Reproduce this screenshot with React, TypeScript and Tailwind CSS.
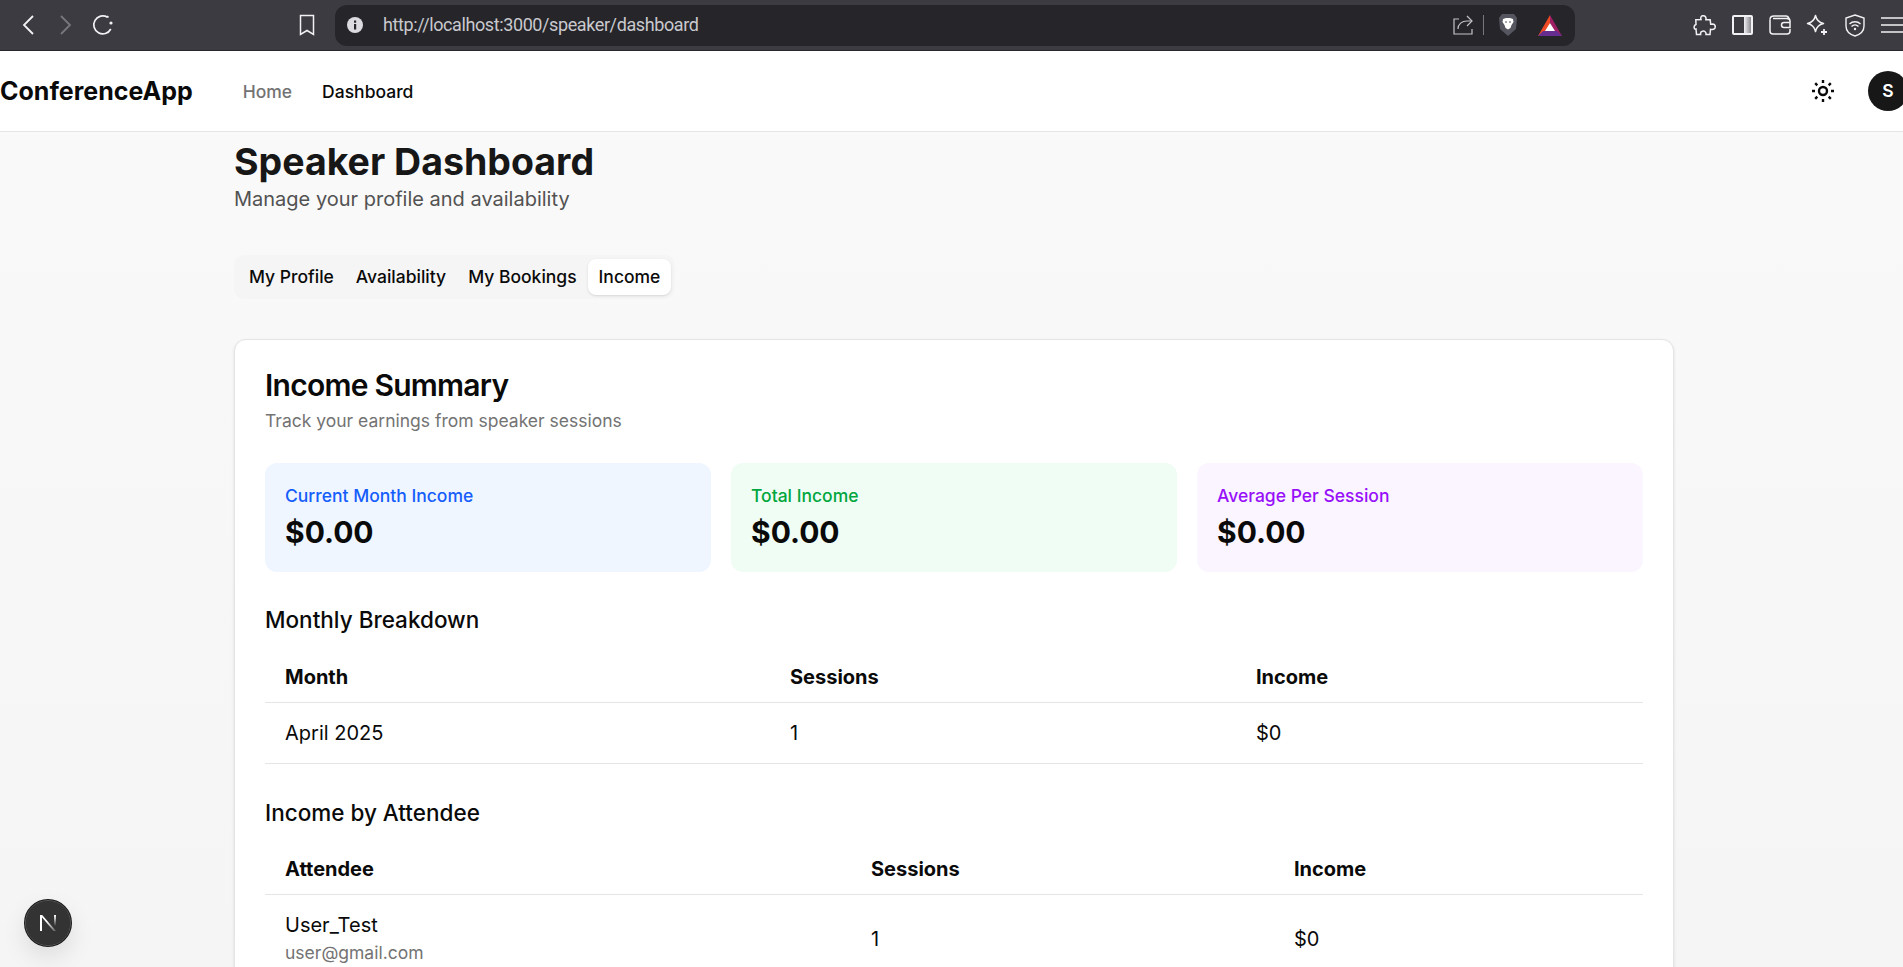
const tabs = ['My Profile', 'Availability', 'My Bookings', 'Income'];

const summary = [
  { label: 'Current Month Income', box: 'bg-[#eff6ff]', text: 'text-[#155dfc]' },
  { label: 'Total Income', box: 'bg-[#f0fdf4]', text: 'text-[#00a63e]' },
  { label: 'Average Per Session', box: 'bg-[#faf5ff]', text: 'text-[#9810fa]' },
];

function BrowserBar() {
  return (
    <div className="h-[51px] bg-[#3b3b41] border-b border-[#28282c] flex items-center shrink-0 text-[#f2f2f4]">
      <div className="flex items-center w-[335px] shrink-0 pl-[22px]">
        <svg width="12" height="20" viewBox="0 0 12 20" fill="none" stroke="currentColor" strokeWidth="1.8">
          <path d="M11 1 2 10l9 9" />
        </svg>
        <svg width="12" height="20" viewBox="0 0 12 20" fill="none" stroke="#77777c" strokeWidth="1.8" className="ml-[26px]">
          <path d="m1 1 9 9-9 9" />
        </svg>
        <svg width="22" height="22" viewBox="0 0 22 22" fill="none" stroke="currentColor" strokeWidth="1.7" className="ml-[20px]">
          <path d="M15.5 3.2A9 9 0 1 0 18.8 15" />
          <path d="M15 2l1.5 1.5" />
          <circle cx="19" cy="9" r="1.6" fill="currentColor" stroke="none" />
        </svg>
        <svg width="16" height="22" viewBox="0 0 16 22" fill="none" stroke="currentColor" strokeWidth="1.5" className="ml-[185px]">
          <path d="M1.5 1.5h13v19L8 16.5l-6.500 4z" />
        </svg>
      </div>
      <div className="w-[1240px] h-[41px] shrink-0 bg-[#25252a] rounded-[12px] flex items-center pl-[12px] pr-[13px]">
        <svg width="16" height="16" viewBox="0 0 16 16">
          <circle cx="8" cy="8" r="8" fill="#dcdce0" />
          <rect x="7" y="7" width="2.200" height="5.500" fill="#25252a" />
          <rect x="7" y="3.500" width="2.200" height="2.200" fill="#25252a" />
        </svg>
        <span className="ml-[20px] -mt-[2px] text-[18px] tracking-[-0.4px] text-[#c9c9ce] font-['Roboto',sans-serif]">http://localhost:3000/speaker/dashboard</span>
        <div className="ml-auto flex items-center">
          <svg width="20" height="20" viewBox="0 0 20 20" fill="none" stroke="#c4c4c8" strokeWidth="1.200">
            <path d="M6 4H1v15h18v-5" />
            <path d="M5 14c0-5 4-8 9-8h4" />
            <path d="M14 1l5 5-5 5" />
          </svg>
          <div className="w-px h-[20px] bg-[#77777c] ml-[10px]" />
          <svg width="20" height="24" viewBox="0 0 20 24" className="ml-[14px]">
            <path d="M4 1h12l3 4-1 11-8 7-8-7L1 5z" fill="#565661" />
            <path d="M5 6l3-1h4l3 1 .5 3-2 3-1 3-2.500 1.500L7.500 15l-1-3-2-3z" fill="#fff" />
            <path d="M7 9h2M11 9h2" stroke="#565661" strokeWidth="1" />
          </svg>
          <svg width="24" height="21" viewBox="0 0 24 21" className="ml-[20px]">
            <path d="M12 0 L24 21 H17 L12 8z" fill="#9e1f63" />
            <path d="M12 0 L0 21 H7 L12 8z" fill="#ef4a23" />
            <path d="M0 21 H24 L19 16 H5z" fill="#662d91" />
            <path d="M12 8 L17 16 H7z" fill="#fff" />
          </svg>
        </div>
      </div>
      <div className="flex items-center shrink-0 ml-[111px]">
        <div className="w-[37.500px] flex justify-center">
          <svg width="23" height="23" viewBox="0 0 23 23" fill="none" stroke="currentColor" strokeWidth="1.500">
            <path d="M8 5.500C6.500 1.500 12 0 13 4c.2.800-.2 1.300-.2 1.800h4.400l.5 4.500c.5 0 1-.3 1.800-.3 4 .5 3.500 6-.7 5.500-.5 0-1-.2-1.300-.2l-.5 5.200h-4c0-.7.200-1-.300-2-1.400-2.500-5.500-1.500-5.200 1.500l.1.500H3.500l-.5-5.500C.5 16 .5 11 3 10.500l-.2-4.700z" />
          </svg>
        </div>
        <div className="w-[37.500px] flex justify-center">
          <div className="w-[21px] h-[20px] border-2 border-[#f2f2f4] rounded-[2px] flex justify-end">
            <div className="w-[7px] bg-gradient-to-r from-[#f2f2f4] to-[#8a8a8f]" />
          </div>
        </div>
        <div className="w-[37.500px] flex justify-center">
          <svg width="22" height="20" viewBox="0 0 22 20" fill="none" stroke="currentColor" strokeWidth="1.500">
            <path d="M1 4.500C1 2 2.500 1 5 1h12c1.500 0 2.500 1 3 2.500H4" />
            <path d="M1 4.500V16c0 2 1 3 3 3h14c2 0 3-1 3-3v-2" />
            <path d="M21 7v-1c0-1.500-1-2.500-3-2.500" />
            <path d="M21 7.500h-6c-1.500 0-2.500 1-2.500 2.500s1 2.500 2.500 2.500h6z" />
          </svg>
        </div>
        <div className="w-[37.500px] flex justify-center">
          <svg width="22" height="22" viewBox="0 0 22 22" fill="none" stroke="currentColor" strokeWidth="1.500">
            <path d="M9.500 1.500c1 4.500 3.500 7 8 8-4.500 1-7 3.500-8 8-1-4.500-3.500-7-8-8 4.500-1 7-3.500 8-8z" strokeLinejoin="round" />
            <path d="M18 15v6M15 18h6" strokeWidth="1.800" />
          </svg>
        </div>
        <div className="w-[37.500px] flex justify-center">
          <svg width="20" height="23" viewBox="0 0 20 23" fill="none" stroke="currentColor" strokeWidth="1.400">
            <path d="M10 1l9 3v8c0 5-4 8.500-9 10C5 20.500 1 17 1 12V4z" />
            <path d="M4.500 10c3-3 8-3 11 0M6.500 12.500c2-2 5-2 7 0" />
            <circle cx="10" cy="15" r="1.200" fill="currentColor" stroke="none" />
          </svg>
        </div>
        <div className="w-[37.500px] flex justify-center">
          <svg width="23" height="16" viewBox="0 0 23 16" fill="none" stroke="currentColor" strokeWidth="1.500">
            <path d="M0 1h23M0 8h23M0 15h23" />
          </svg>
        </div>
      </div>
    </div>
  );
}

function NavBar() {
  return (
    <nav className="h-[81px] w-[1908px] shrink-0 bg-white border-b border-[#e5e5e5] flex items-center">
      <div className="flex items-center pt-[2px]">
        <span className="text-[25px] font-bold text-[#0a0a0a]">ConferenceApp</span>
        <a className="ml-[50px] text-[17.500px] font-medium text-[#737373]">Home</a>
        <a className="ml-[30px] text-[17.500px] font-medium text-[#0a0a0a]">Dashboard</a>
      </div>
      <div className="ml-auto flex items-center">
        <svg width="24" height="24" viewBox="0 0 24 24" fill="none" stroke="#0a0a0a" strokeWidth="2.400">
          <circle cx="12" cy="12" r="4" />
          <path d="M12 1v3M12 20v3M1 12h3M20 12h3M4.200 4.200l2.100 2.100M17.700 17.700l2.100 2.100M4.200 19.800l2.100-2.100M17.700 6.300l2.100-2.100" />
        </svg>
        <div className="ml-[33px] w-[40px] h-[40px] rounded-full bg-[#171717] text-white flex items-center justify-center text-[17.500px] font-semibold">S</div>
      </div>
    </nav>
  );
}

export default function App() {
  return (
    <div className="h-screen overflow-hidden flex flex-col font-['Inter',sans-serif] bg-gradient-to-b from-[#fafafa] to-[#f5f5f5] text-[#0a0a0a]">
      <BrowserBar />
      <NavBar />
      <main className="w-[1440px] ml-[234px] shrink-0">
        <h1 className="text-[37.500px] leading-[48px] font-bold text-[#171717] mt-[6px]">Speaker Dashboard</h1>
        <p className="text-[20px] leading-[28px] text-[#525252] -mt-[1px]">Manage your profile and availability</p>

        <div className="mt-[42px] w-fit h-[44px] p-[4px] bg-[#f5f5f5] rounded-[10px] flex items-center">
          {tabs.map((t) => (
            <button
              key={t}
              className={`h-[36px] px-[11px] rounded-[8px] text-[17.500px] font-medium text-[#0a0a0a] ${t === 'Income' ? 'bg-white shadow-sm' : ''}`}
            >
              {t}
            </button>
          ))}
        </div>

        <section className="mt-[40px] bg-white border border-[#e5e5e5] rounded-[12px] shadow-sm px-[30px] pt-[27px] pb-[30px]">
          <h2 className="text-[30px] leading-[36px] font-semibold tracking-tight">Income Summary</h2>
          <p className="mt-[6px] text-[17.500px] leading-[24px] text-[#737373]">Track your earnings from speaker sessions</p>

          <div className="mt-[30px] grid grid-cols-3 gap-[20px]">
            {summary.map((s) => (
              <div key={s.label} className={`h-[109px] rounded-[12px] px-[20px] pt-[21px] ${s.box}`}>
                <div className={`text-[17.500px] leading-[24px] font-medium ${s.text}`}>{s.label}</div>
                <div className="mt-[4px] text-[30px] leading-[40px] font-bold">$0.00</div>
              </div>
            ))}
          </div>

          <h3 className="mt-[33px] text-[22.500px] leading-[30px] font-medium">Monthly Breakdown</h3>
          <table className="mt-[17px] w-full text-[20px] table-fixed">
            <thead>
              <tr className="border-b border-[#e5e5e5] h-[50px]">
                <th className="w-[525px] pl-[20px] text-left font-bold">Month</th>
                <th className="w-[466px] text-left font-bold">Sessions</th>
                <th className="text-left font-bold">Income</th>
              </tr>
            </thead>
            <tbody>
              <tr className="border-b border-[#e5e5e5] h-[61px]">
                <td className="pl-[20px]">April 2025</td>
                <td>1</td>
                <td>$0</td>
              </tr>
            </tbody>
          </table>

          <h3 className="mt-[34px] text-[22.500px] leading-[30px] font-medium">Income by Attendee</h3>
          <table className="mt-[17px] w-full text-[20px] table-fixed">
            <thead>
              <tr className="border-b border-[#e5e5e5] h-[50px]">
                <th className="w-[606px] pl-[20px] text-left font-bold">Attendee</th>
                <th className="w-[423px] text-left font-bold">Sessions</th>
                <th className="text-left font-bold">Income</th>
              </tr>
            </thead>
            <tbody>
              <tr className="h-[88px]">
                <td className="pl-[20px]">
                  <div className="leading-[28px]">User_Test</div>
                  <div className="text-[17.500px] leading-[24px] text-[#737373] mt-[2px] mb-[2px]">user@gmail.com</div>
                </td>
                <td>1</td>
                <td>$0</td>
              </tr>
            </tbody>
          </table>
        </section>
      </main>

      <div className="fixed left-[24px] top-[899px] w-[48px] h-[48px] rounded-full bg-[#333333] border-2 border-[#1a1a1a] outline outline-1 outline-[#555555] -outline-offset-2 shadow-[0_10px_24px_rgba(0,0,0,0.1)] flex items-center justify-center">
        <svg width="18" height="18" viewBox="0 0 18 18">
          <defs>
            <linearGradient id="nDiag" x1="0" y1="0" x2="1" y2="1">
              <stop offset="0.400" stopColor="#ffffff" />
              <stop offset="1" stopColor="#ffffff" stopOpacity="0.200" />
            </linearGradient>
            <linearGradient id="nRight" x1="0" y1="0" x2="0" y2="1">
              <stop offset="0" stopColor="#ffffff" />
              <stop offset="1" stopColor="#ffffff" stopOpacity="0" />
            </linearGradient>
          </defs>
          <path d="M1 1h2v16H1z" fill="#ffffff" />
          <path d="M1 1h2.200L17 17h-2.400z" fill="url(#nDiag)" />
          <path d="M15 1h2v11h-2z" fill="url(#nRight)" />
        </svg>
      </div>
    </div>
  );
}
